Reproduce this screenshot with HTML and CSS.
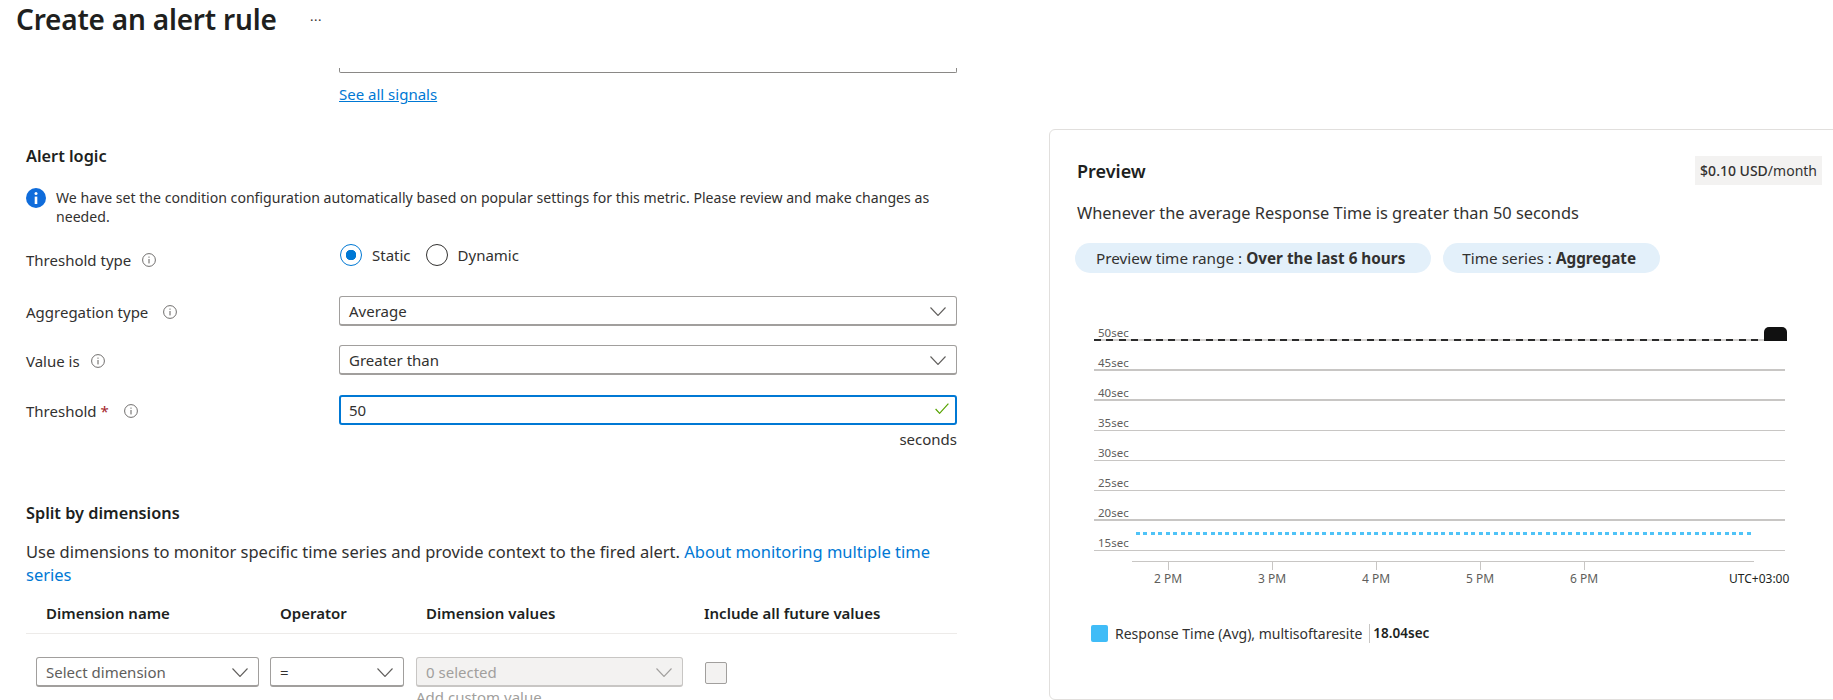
FILE: index.html
```html
<!DOCTYPE html>
<html lang="en">
<head>
    <meta charset="UTF-8">
    <title>Create an alert rule</title>
    <link rel="stylesheet" href="styles.css">
</head>
<body>
    <svg class="defs" width="0" height="0">
        <symbol id="chev" viewBox="0 0 16 9"><path d="M.5.5 8 8.5 15.5.5" fill="none" stroke="currentColor" stroke-width="1.1"/></symbol>
        <symbol id="info" viewBox="0 0 14 14"><circle cx="7" cy="7" r="6.4" fill="none" stroke="#605e5c" stroke-width=".9"/><path d="M7 6v4.4" stroke="#605e5c" stroke-width="1"/><circle cx="7" cy="4.1" r=".7" fill="#605e5c"/></symbol>
    </svg>

    <!-- Title -->
    <header class="header">
        <h1 class="title">Create an alert rule</h1>
        <span class="more">&middot;&middot;&middot;</span>
    </header>

    <div class="content">
        <!-- Form -->
        <main class="form">
            <div class="signal-box"></div>
            <a class="link see-all" href="#">See all signals</a>

            <h2 class="section first">Alert logic</h2>
            <div class="note">
                <svg class="note-icon" viewBox="0 0 20 20"><circle cx="10" cy="10" r="10" fill="#0f6cdb"/><circle cx="10" cy="5.4" r="1.5" fill="#fff"/><path d="M10 8.6v7.4" stroke="#fff" stroke-width="2.6"/></svg>
                <p>We have set the condition configuration automatically based on popular settings for this metric. Please review and make changes as needed.</p>
            </div>

            <div class="row row-radio">
                <label class="label">Threshold type <svg class="tip"><use href="#info"/></svg></label>
                <div class="radios">
                    <span class="radio on"></span><span class="radio-text">Static</span>
                    <span class="radio"></span><span class="radio-text">Dynamic</span>
                </div>
            </div>
            <div class="row row-first">
                <label class="label label-wide">Aggregation type <svg class="tip"><use href="#info"/></svg></label>
                <div class="select">Average<svg class="chev"><use href="#chev"/></svg></div>
            </div>
            <div class="row">
                <label class="label">Value is <svg class="tip"><use href="#info"/></svg></label>
                <div class="select">Greater than<svg class="chev"><use href="#chev"/></svg></div>
            </div>
            <div class="row row-last">
                <label class="label">Threshold <span class="star">*</span> <svg class="tip"><use href="#info"/></svg></label>
                <div class="select focused">50<svg class="check" viewBox="0 0 14 11"><path d="M.6 6 4.6 10.3 13.4.6" fill="none" stroke="#57a300" stroke-width="1.2"/></svg></div>
            </div>
            <div class="unit">seconds</div>

            <h2 class="section split">Split by dimensions</h2>
            <p class="split-text">Use dimensions to monitor specific time series and provide context to the fired alert. <a class="plain-link" href="#">About monitoring multiple time series</a></p>

            <div class="dim-head">
                <span>Dimension name</span>
                <span>Operator</span>
                <span>Dimension values</span>
                <span>Include all future values</span>
            </div>
            <div class="dim-row">
                <div class="select dim-name muted">Select dimension<svg class="chev"><use href="#chev"/></svg></div>
                <div class="select dim-op">=<svg class="chev"><use href="#chev"/></svg></div>
                <div class="dim-values">
                    <div class="select disabled">0 selected<svg class="chev"><use href="#chev"/></svg></div>
                    <div class="add-custom">Add custom value</div>
                </div>
                <span class="checkbox"></span>
            </div>
        </main>

        <!-- Preview -->
        <section class="card">
            <div class="card-head">
                <h2 class="card-title">Preview</h2>
                <div class="price"><b>$0.10 USD</b>/month</div>
            </div>
            <p class="summary">Whenever the average Response Time is greater than 50 seconds</p>
            <div class="pills">
                <span class="pill">Preview time range : <b>Over the last 6 hours</b></span>
                <span class="pill pill-two">Time series : <b>Aggregate</b></span>
            </div>

            <div class="chart">
                <div class="grid-row threshold">50sec</div>
                <div class="grid-row heavy">45sec</div>
                <div class="grid-row heavy">40sec</div>
                <div class="grid-row">35sec</div>
                <div class="grid-row">30sec</div>
                <div class="grid-row">25sec</div>
                <div class="grid-row heavy">20sec</div>
                <div class="grid-row">15sec</div>
                <div class="series"></div>
                <div class="blob"></div>
            </div>
            <div class="axis">
                <div class="ticks">
                    <span>2 PM</span>
                    <span>3 PM</span>
                    <span>4 PM</span>
                    <span>5 PM</span>
                    <span>6 PM</span>
                </div>
                <div class="utc">UTC+03:00</div>
            </div>

            <div class="legend">
                <span class="swatch"></span>
                <span class="legend-name">Response Time (Avg), multisoftaresite</span>
                <span class="legend-value">18.04sec</span>
            </div>
        </section>
    </div>
</body>
</html>
```

FILE: styles.css
```css
* {
    box-sizing: border-box;
    margin: 0;
    padding: 0;
}

html, body {
    height: 700px;
    overflow: hidden;
}

body {
    font-family: 'Noto Sans', 'Open Sans', sans-serif;
    font-size: 15px;
    color: #323130;
    background: #fff;
}

.defs {
    display: block;
    height: 0;
}

.header {
    height: 40px;
    display: flex;
    padding-left: 16px;
}

.title {
    font-size: 28px;
    font-weight: 600;
    line-height: 38px;
    color: #201f1e;
    letter-spacing: -0.2px;
    width: 294px;
}

.more {
    font-size: 13px;
    line-height: 40px;
    letter-spacing: 0.5px;
    color: #323130;
}

.content {
    display: flex;
}

/* left column */
.form {
    width: 957px;
    flex: none;
    padding-left: 26px;
}

.signal-box {
    height: 5px;
    margin: 28px 0 0 313px;
    border: 1px solid #8a8886;
    border-top: none;
    border-radius: 0 0 2px 2px;
}

.link {
    color: #0078d4;
    font-size: 15px;
}

.see-all {
    display: block;
    line-height: 20px;
    margin: 11px 0 0 313px;
}

.section {
    font-size: 16.3px;
    font-weight: 600;
    line-height: 20px;
    color: #201f1e;
}

.section.first {
    margin-top: 42px;
}

.note {
    display: flex;
    margin-top: 22px;
}

.note-icon {
    width: 20px;
    height: 20px;
    flex: none;
    margin-right: 10px;
}

.note p {
    line-height: 19px;
    font-size: 14.1px;
    width: 880px;
}

.row {
    display: grid;
    grid-template-columns: 313px 618px;
    margin-top: 19px;
}

.row-radio {
    margin-top: 18px;
    height: 26px;
}

.row-first {
    margin-top: 26px;
}

.row-last {
    margin-top: 20px;
}

.label {
    line-height: 20px;
    padding-top: 2px;
    display: flex;
    align-items: center;
    height: 30px;
    white-space: pre;
}

.tip {
    width: 14px;
    height: 14px;
    margin-left: 7px;
}

.label-wide .tip {
    margin-left: 11px;
}

.star {
    color: #a4262c;
    margin-right: 8px;
}

.row-radio .label {
    height: 26px;
    padding-top: 6px;
}

.radios {
    display: flex;
    align-items: flex-start;
    line-height: 22px;
    padding-left: 1px;
}

.radio {
    width: 22px;
    height: 22px;
    border-radius: 50%;
    border: 1px solid #323130;
    margin-right: 10px;
}

.radio.on {
    border-color: #0078d4;
    background: radial-gradient(circle, #0078d4 5px, #fff 5.5px);
}

.radio-text {
    margin-right: 15px;
}

.select {
    height: 30px;
    border: 1px solid #a19f9d;
    border-bottom-width: 2px;
    border-radius: 3px;
    padding-left: 9px;
    line-height: 29px;
    display: flex;
    justify-content: space-between;
}

.chev {
    width: 16px;
    height: 9px;
    margin: 10px 10px 0 0;
    color: #605e5c;
}

.check {
    width: 14px;
    height: 11px;
    margin: 6px 6px 0 0;
}

.select.focused {
    border: 2px solid #0078d4;
    padding-left: 8px;
    line-height: 26px;
}

.unit {
    line-height: 20px;
    margin-top: 4px;
    width: 931px;
    text-align: right;
}

.section.split {
    margin-top: 54px;
}

.split-text {
    font-size: 16.5px;
    line-height: 23px;
    margin-top: 17px;
    width: 905px;
}

.plain-link {
    color: #0078d4;
    text-decoration: none;
}

.dim-head {
    display: grid;
    grid-template-columns: 234px 146px 278px 1fr;
    height: 48px;
    width: 931px;
    padding: 6px 0 0 20px;
    align-items: center;
    font-weight: 600;
    border-bottom: 1px solid #edebe9;
    color: #201f1e;
}

.dim-row {
    display: flex;
    margin: 23px 0 0 10px;
    align-items: flex-start;
}

.dim-name {
    width: 223px;
    margin-right: 11px;
}

.muted {
    color: #605e5c;
}

.dim-op {
    width: 134px;
    margin-right: 12px;
}

.dim-values {
    width: 267px;
    margin-right: 22px;
}

.select.disabled {
    background: #f3f2f1;
    color: #a19f9d;
    border-color: #c8c6c4;
}

.select.disabled .chev {
    color: #a19f9d;
}

.add-custom {
    line-height: 20px;
    color: #a19f9d;
}

.checkbox {
    width: 22px;
    height: 22px;
    margin-top: 5px;
    background: #f3f2f1;
    border: 1px solid #a19f9d;
    border-radius: 2px;
}

/* preview card */
.card {
    width: 820px;
    height: 571px;
    flex: none;
    margin: 89px 0 0 92px;
    border: 1px solid #e1dfdd;
    border-radius: 6px;
    padding: 26px 0 0 27px;
}

.card-head {
    width: 745px;
    display: flex;
    justify-content: space-between;
    align-items: center;
}

.card-title {
    font-size: 18px;
    font-weight: 600;
    color: #201f1e;
}

.price {
    height: 29px;
    line-height: 29px;
    padding: 0 5px;
    background: #f3f2f1;
    font-size: 14px;
}

.price b {
    font-weight: 500;
}

.summary {
    font-size: 16.4px;
    line-height: 22px;
    margin-top: 17px;
}

.pills {
    display: flex;
    gap: 12px;
    margin: 19px 0 0 -2px;
}

.pill {
    height: 30px;
    line-height: 30px;
    padding: 0 26px 0 21px;
    border-radius: 15px;
    background: #e3f0fa;
    font-size: 15.3px;
}

.pill-two {
    padding: 0 24px 0 19px;
}

.chart {
    position: relative;
    width: 691px;
    margin: 38px 0 0 17px;
}

.grid-row {
    height: 30px;
    padding: 14px 0 0 4px;
    font-size: 11.5px;
    line-height: 15px;
    color: #605e5c;
    border-bottom: 1px solid #c8c6c4;
}

.grid-row.heavy {
    border-bottom-width: 2px;
}

.threshold {
    background: repeating-linear-gradient(90deg, #2b2b2b 0 7px, #d2d0ce 7px 12.4px) bottom / 100% 2px no-repeat;
    border-bottom: none;
}

.series {
    position: absolute;
    left: 42px;
    top: 221px;
    width: 616px;
    height: 3px;
    background: repeating-linear-gradient(90deg, #4fc3f7 0 4px, transparent 4px 7.45px);
}

.blob {
    position: absolute;
    left: 670px;
    top: 16px;
    width: 23px;
    height: 14px;
    background: #111;
    border-radius: 5px 5px 0 0;
}

.axis {
    display: flex;
    margin: 10px 0 0 55px;
}

.ticks {
    width: 622px;
    height: 27px;
    flex: none;
    display: flex;
    border-top: 1px solid #c8c6c4;
    margin-right: -25px;
}

.ticks span {
    width: 104px;
    flex: none;
    text-align: center;
    font-size: 12px;
    line-height: 16px;
    color: #605e5c;
    padding-top: 9px;
    background: linear-gradient(#c8c6c4, #c8c6c4) center top / 1px 8px no-repeat;
    height: 30px;
    position: relative;
    left: -16px;
}

.utc {
    font-size: 12px;
    line-height: 16px;
    padding-top: 10px;
    color: #201f1e;
}

.legend {
    display: flex;
    align-items: center;
    height: 20px;
    margin: 35px 0 0 14px;
}

.swatch {
    width: 17px;
    height: 17px;
    background: #40bcf7;
    border-radius: 2px;
    margin-right: 7px;
}

.legend-name {
    font-size: 14px;
    padding-right: 7px;
    border-right: 1px solid #c8c6c4;
    line-height: 19px;
}

.legend-value {
    font-size: 13.5px;
    font-weight: 600;
    margin-left: 3px;
    color: #201f1e;
}
```
